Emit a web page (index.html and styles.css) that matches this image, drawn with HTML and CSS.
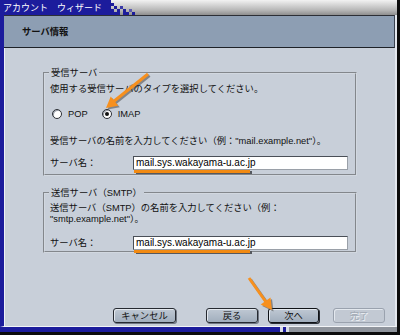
FILE: index.html
```html
<!DOCTYPE html>
<html lang="ja">
<head>
<meta charset="utf-8">
<title>アカウント ウィザード</title>
<link rel="stylesheet" href="styles.css">
</head>
<body>
<div class="window">
  <div class="titlebar">
    <div class="title">アカウント　ウィザード</div>
    <svg class="dither" width="30" height="15" viewBox="0 0 30 15">
      <rect x="0" y="0" width="3" height="15" fill="#1c1c9c"/>
      <rect x="3" y="3" width="3" height="3" fill="#1c1c9c"/>
      <rect x="3" y="9" width="3" height="6" fill="#1c1c9c"/>
      <rect x="6" y="6" width="3" height="3" fill="#1c1c9c"/>
      <rect x="6" y="12" width="6" height="3" fill="#1c1c9c"/>
      <rect x="9" y="9" width="3" height="3" fill="#1c1c9c"/>
      <rect x="12" y="6" width="3" height="3" fill="#3a3aa8"/>
      <rect x="15" y="9" width="3" height="6" fill="#1c1c9c"/>
      <rect x="18" y="12" width="3" height="3" fill="#1c1c9c"/>
      <rect x="21" y="9" width="3" height="3" fill="#5a5ab0"/>
      <rect x="24" y="12" width="3" height="3" fill="#1c1c9c"/>
    </svg>
  </div>
  <div class="frame">
    <div class="header">サーバ情報</div>
    <div class="content">
      <fieldset class="group group-in">
        <legend>受信サーバ</legend>
        <p class="line first">使用する受信サーバのタイプを選択してください。</p>
        <div class="radios">
          <span class="radio"></span><span class="rlabel pop">POP</span>
          <span class="radio checked"></span><span class="rlabel">IMAP</span>
        </div>
        <p class="line third">受信サーバの名前を入力してください（例："mail.example.net"）。</p>
        <div class="row">
          <span class="label">サーバ名：</span>
          <div class="field">mail.sys.wakayama-u.ac.jp<span class="mark"></span></div>
        </div>
      </fieldset>
      <fieldset class="group group-out">
        <legend>送信サーバ（SMTP）</legend>
        <p class="line two">送信サーバ（SMTP）の名前を入力してください（例：<br>"smtp.example.net"）。</p>
        <div class="row row-out">
          <span class="label">サーバ名：</span>
          <div class="field">mail.sys.wakayama-u.ac.jp<span class="mark"></span></div>
        </div>
      </fieldset>
      <div class="buttons">
        <span class="btn cancel">キャンセル</span>
        <span class="btn back">戻る</span>
        <span class="btn next">次へ</span>
        <span class="btn done">完了</span>
      </div>
    </div>
  </div>
  <div class="bottombar"></div>
  <svg class="arrows" width="400" height="335" viewBox="0 0 400 335">
    <g transform="translate(1.5,1.5)" fill="#4a4a4a" stroke="#4a4a4a" opacity="0.55">
      <line x1="148" y1="74" x2="113" y2="102" stroke-width="3"/>
      <polygon points="106,108 118.3,105.8 110.7,96.4" stroke="none"/>
      <line x1="249" y1="278" x2="266" y2="302" stroke-width="3"/>
      <polygon points="272,310 260.7,304.6 270.5,297.6" stroke="none"/>
    </g>
    <g fill="#f7901e" stroke="#f7901e">
      <line x1="148" y1="74" x2="113" y2="102" stroke-width="3"/>
      <polygon points="106,108 118.3,105.8 110.7,96.4" stroke="none"/>
      <line x1="249" y1="278" x2="266" y2="302" stroke-width="3"/>
      <polygon points="272,310 260.7,304.6 270.5,297.6" stroke="none"/>
    </g>
  </svg>
</div>
</body>
</html>
```
FILE: styles.css
```css
html, body {
  margin: 0;
  padding: 0;
  background: #ffffff;
}
body {
  font-family: "Liberation Sans", "Noto Sans CJK JP", sans-serif;
  font-size: 9.3px;
  color: #111;
}
.window {
  position: relative;
  width: 400px;
  height: 335px;
  box-sizing: border-box;
  border-right: 3px solid #0c0c0c;
  display: flex;
  flex-direction: column;
  background: #c8cfd9;
  overflow: hidden;
}
.titlebar {
  height: 15px;
  flex: none;
  display: flex;
  background: linear-gradient(#f2f2f2, #b4b4b4 70%, #8e8e8e);
}
.title {
  width: 108px;
  background: #1c1c9c;
  color: #fff;
  font-family: "Noto Sans CJK JP", sans-serif;
  font-size: 9px;
  line-height: 15px;
  padding-left: 3px;
  box-sizing: border-box;
  white-space: nowrap;
}
.dither {
  display: block;
  flex: none;
}
.frame {
  flex: 1;
  display: flex;
  flex-direction: column;
  border-left: 4px solid #1c1c9c;
  border-right: 2px solid #e4e8ee;
  border-bottom: 1px solid #f2f4f7;
  min-height: 0;
}
.header {
  height: 31px;
  flex: none;
  background: #8d9eb3;
  border-top: 1px solid #2c2f36;
  border-bottom: 1px solid #1e2228;
  border-right: 1px solid #3a4250;
  font-family: "Noto Sans CJK JP", sans-serif;
  font-weight: bold;
  font-size: 9.3px;
  line-height: 31px;
  padding-left: 18px;
  color: #111;
}
.content {
  flex: 1;
  display: flex;
  flex-direction: column;
  border-left: 1px solid #eef1f5;
  padding: 19px 10px 3px 38px;
  min-height: 0;
}
.group {
  width: 314px;
  box-sizing: border-box;
  margin: 0;
  padding: 0 5px 4px 5px;
  border: 2px groove #d2d8e0;
}
.group legend {
  padding: 0 2px;
  margin-left: -1px;
  line-height: 12px;
  height: 12px;
}
.line {
  margin: 0;
  line-height: 12px;
  white-space: nowrap;
}
.first { margin-top: 4px; }
.radios {
  display: flex;
  align-items: center;
  height: 12px;
  margin-top: 13px;
  padding-left: 2px;
}
.radio {
  width: 10px;
  height: 10px;
  box-sizing: border-box;
  border-radius: 50%;
  border: 1px solid #2a2e35;
  background: #fff;
  box-shadow: inset 1px 1px 0 #9aa1ab;
  position: relative;
}
.radio.checked::after {
  content: "";
  position: absolute;
  left: 2px;
  top: 2px;
  width: 4px;
  height: 4px;
  border-radius: 50%;
  background: #111;
}
.rlabel {
  margin-left: 6px;
  line-height: 12px;
}
.rlabel.pop { margin-right: 14px; }
.third { margin-top: 15px; }
.row {
  display: flex;
  align-items: center;
  margin-top: 9px;
  height: 14px;
}
.label {
  width: 83px;
  flex: none;
  line-height: 12px;
}
.field {
  position: relative;
  width: 215px;
  height: 14px;
  box-sizing: border-box;
  background: #fff;
  border: 1px solid #4a4f57;
  border-right-color: #9aa0a8;
  border-bottom-color: #9aa0a8;
  font-size: 10px;
  line-height: 12px;
  padding-left: 2px;
  color: #000;
}
.mark {
  position: absolute;
  left: 0;
  top: 13px;
  width: 116px;
  height: 3px;
  background: #f28a12;
  box-shadow: 2px 1px 0 #55585e;
}
.group-out {
  margin-top: 11px;
  padding-bottom: 1px;
}
.two {
  margin-top: 4px;
  line-height: 11px;
}
.row-out { margin-top: 11px; }
.buttons {
  margin-top: auto;
  display: flex;
  justify-content: flex-end;
}
.btn {
  height: 15px;
  box-sizing: border-box;
  display: flex;
  align-items: center;
  justify-content: center;
  border: 1px solid #262a31;
  border-radius: 3px;
  background: linear-gradient(#bfc8d3, #a1aebd);
  box-shadow: inset 1px 1px 0 #e3e8ee, 1px 1px 0 #6f7682;
  line-height: 12px;
  color: #111;
}
.cancel { width: 63px; margin-right: 30px; }
.back { width: 52px; margin-right: 10px; }
.next { width: 51px; margin-right: 14px; border: 1px solid #101317; box-shadow: inset 1px 1px 0 #e3e8ee, 1px 1px 0 #2a2e35; }
.done {
  width: 52px;
  border-color: #9aa2ae;
  background: #c2c9d3;
  box-shadow: inset 1px 1px 0 #e3e8ee;
  color: #a2aab5;
  text-shadow: 1px 1px 0 #eef1f5;
}
.bottombar {
  height: 5px;
  flex: none;
  border-bottom: 3px solid #0c0c0c;
  background: linear-gradient(to right, #1c1c9c 0 280px, #d8dce4 280px 283px, #1c1c9c 283px 286px, #d8dce4 286px 289px, #8f949c 289px);
}
.arrows {
  position: absolute;
  left: 0;
  top: 0;
  pointer-events: none;
}
```
